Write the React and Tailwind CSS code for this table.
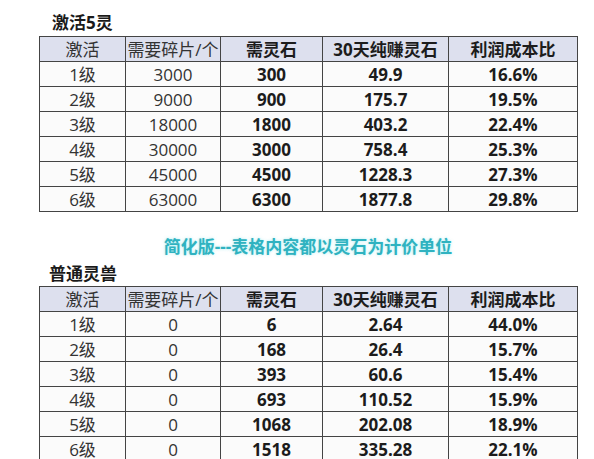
const cols = ["w-[86px]", "w-[95px]", "w-[102px]", "w-[126px]", "w-[129px]"];

const head = ["激活", "需要碎片/个", "需灵石", "30天纯赚灵石", "利润成本比"];

const fiveSpirit = [
    ["1级", "3000", "300", "49.9", "16.6%"],
    ["2级", "9000", "900", "175.7", "19.5%"],
    ["3级", "18000", "1800", "403.2", "22.4%"],
    ["4级", "30000", "3000", "758.4", "25.3%"],
    ["5级", "45000", "4500", "1228.3", "27.3%"],
    ["6级", "63000", "6300", "1877.8", "29.8%"]
];

const beast = [
    ["1级", "0", "6", "2.64", "44.0%"],
    ["2级", "0", "168", "26.4", "15.7%"],
    ["3级", "0", "393", "60.6", "15.4%"],
    ["4级", "0", "693", "110.52", "15.9%"],
    ["5级", "0", "1068", "202.08", "18.9%"],
    ["6级", "0", "1518", "335.28", "22.1%"]
];

const Table = ({ rows }) => {
    return (
        <table className="w-[538px] table-fixed border-collapse border border-[#444] text-[17px]">
            <thead>
                <tr className="h-[25px] bg-[#dde0ee]">
                    {head.map((text, i) => (
                        <th
                            key={text}
                            className={`${cols[i]} border border-[#444] p-0 text-center leading-[23px] ${i < 2 ? "font-normal text-[#333]" : "font-bold text-[#1c1c1c]"}`}
                        >
                            {text}
                        </th>
                    ))}
                </tr>
            </thead>
            <tbody>
                {rows.map((row) => (
                    <tr key={row[0]} className="h-[25px] bg-[#fbfbfb]">
                        {row.map((cell, i) => (
                            <td
                                key={i}
                                className={`border border-[#444] p-0 text-center leading-[23px] ${i < 2 ? "font-normal text-[#333]" : "font-bold text-[#1c1c1c]"}`}
                            >
                                {cell}
                            </td>
                        ))}
                    </tr>
                ))}
            </tbody>
        </table>
    );
};

const App = () => {
    return (
        <div
            className="h-[459px] w-[594px] overflow-hidden bg-white pl-[39px] pt-[12px]"
            style={{ fontFamily: '"Open Sans", "Noto Sans CJK SC", sans-serif' }}
        >
            <h2 className="mb-[2px] pl-[13px] text-[17px] font-bold leading-[22px] text-[#1a1a1a]">
                激活5灵
            </h2>

            <Table rows={fiveSpirit} />

            <p className="mt-[23px] w-[538px] text-center text-[17px] font-bold leading-[24px] text-[#2fb2c0] [text-shadow:0_0_3px_rgba(90,220,230,0.5)]">
                简化版---表格内容都以灵石为计价单位
            </p>

            <h2 className="mb-[1px] mt-[4px] pl-[10px] text-[17px] font-bold leading-[22px] text-[#1a1a1a]">
                普通灵兽
            </h2>

            <Table rows={beast} />
        </div>
    );
};

export default App;
